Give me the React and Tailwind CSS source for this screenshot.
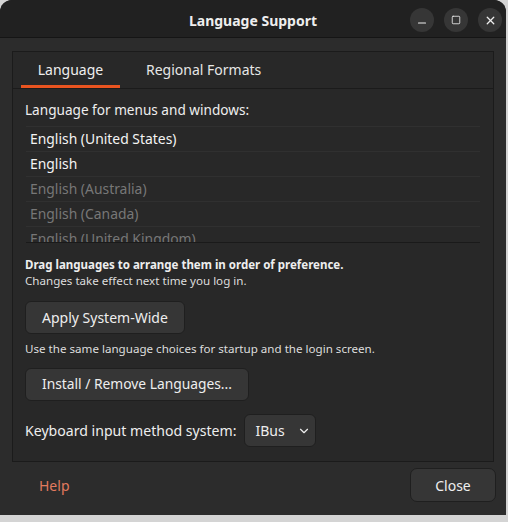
import React from 'react';
import { ChevronDown, Minus, Square, X } from 'lucide-react';

const langs = [
  { name: 'English (United States)', on: true },
  { name: 'English', on: true },
  { name: 'English (Australia)', on: false },
  { name: 'English (Canada)', on: false },
  { name: 'English (United Kingdom)', on: false },
];

const WinButton = ({ children }) => (
  <div className="w-[24px] h-[24px] rounded-full bg-[#363636] flex items-center justify-center text-[#eeeeee]">
    {children}
  </div>
);

const App = () => {
  return (
    <div className="w-[508px] h-[522px] bg-[#d4d4d4] flex flex-col overflow-hidden" style={{ fontFamily: '"Noto Sans", sans-serif' }}>
      <div className="w-[506px] h-[515px] bg-[#2c2c2c] rounded-t-[12px] flex flex-col text-[#eeeeee]">
        {/* title bar */}
        <div className="h-[38px] bg-[#212121] rounded-t-[12px] border-b border-[#151515] flex items-center relative shrink-0">
          <div className="flex-1 text-center text-[14px] font-bold pt-[3px]">Language Support</div>
          <div className="absolute right-[4px] top-[8px] flex gap-[10px]">
            <WinButton><Minus size={12} strokeWidth={2.2} className="mt-[5px]" /></WinButton>
            <WinButton><Square size={10} strokeWidth={2} /></WinButton>
            <WinButton><X size={13} strokeWidth={2.4} /></WinButton>
          </div>
        </div>

        {/* notebook */}
        <div className="mx-[12px] mt-[13px] h-[411px] border border-[#1b1b1b] bg-[#282828] flex flex-col">
          <div className="h-[37px] border-b border-[#1b1b1b] flex text-[14px] shrink-0">
            <div className="ml-[8px] w-[99px] flex flex-col">
              <div className="flex-1 flex items-center justify-center pt-[1px]">Language</div>
              <div className="h-[3px] bg-[#e95420]" />
            </div>
            <div className="ml-[4px] px-[22px] flex items-center pt-[1px] pb-[3px] text-[#e6e6e6]">Regional Formats</div>
          </div>

          <div className="px-[12px] pt-[12px] flex flex-col">
            <div className="text-[13.6px] leading-[18px]">Language for menus and windows:</div>
            <div className="mt-[7px] mx-[1px] h-[117px] overflow-hidden border-b border-[#1a1a1a] flex flex-col">
              {langs.map((l) => (
                <div key={l.name} className="h-[25px] shrink-0 border-t border-[#303030] flex items-center px-[4px] text-[13.9px]">
                  <span className={l.on ? 'text-[#f4f4f4]' : 'text-[#777777]'}>{l.name}</span>
                </div>
              ))}
            </div>

            <div className="mt-[14px] text-[11.5px] leading-[16px] font-bold">Drag languages to arrange them in order of preference.</div>
            <div className="text-[11.6px] leading-[16px] text-[#dddddd]">Changes take effect next time you log in.</div>

            <button className="mt-[12px] self-start h-[33px] px-[16px] rounded-[6px] bg-[#363636] border border-[#1f1f1f] text-[14px] text-[#eeeeee]">
              Apply System-Wide
            </button>
            <div className="mt-[7px] text-[11.6px] leading-[16px] text-[#dddddd]">Use the same language choices for startup and the login screen.</div>

            <button className="mt-[11px] self-start h-[33px] px-[16px] rounded-[6px] bg-[#363636] border border-[#1f1f1f] text-[13.8px] text-[#eeeeee]">
              Install / Remove Languages...
            </button>

            <div className="mt-[13px] flex items-center gap-[7px]">
              <span className="text-[14.1px]">Keyboard input method system:</span>
              <button className="h-[33px] w-[72px] rounded-[6px] bg-[#363636] border border-[#1f1f1f] text-[14px] flex items-center pl-[11px] gap-[12px]">
                IBus
                <ChevronDown size={14} strokeWidth={2} />
              </button>
            </div>
          </div>
        </div>

        {/* footer */}
        <div className="flex items-center justify-between px-[10px] mt-[6px]">
          <div className="ml-[29px] text-[14px] text-[#e27a5e]">Help</div>
          <button className="h-[34px] w-[86px] rounded-[7px] bg-[#363636] border border-[#1f1f1f] text-[14px] text-[#eeeeee]">
            Close
          </button>
        </div>
      </div>
    </div>
  );
};

export default App;
